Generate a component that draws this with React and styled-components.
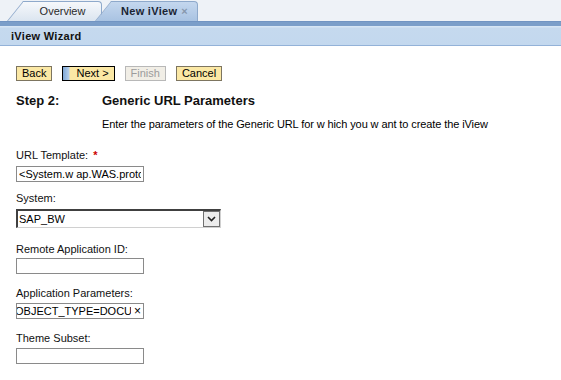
import React from "react";
import styled, { createGlobalStyle } from "styled-components";

const GlobalStyle = createGlobalStyle`
  html, body {
    margin: 0;
    padding: 0;
    background: #fff;
  }
  body {
    font-family: "Liberation Sans", Arial, sans-serif;
    font-size: 11px;
    color: #000;
  }
`;

const Page = styled.div`
  width: 561px;
  height: 380px;
  overflow: hidden;
  background: #fff;
`;

const TabStrip = styled.div`
  display: flex;
  align-items: flex-end;
  height: 21px;
  padding-left: 7px;
  background: #eef2f7;
  box-sizing: border-box;
`;

const Tab = styled.div`
  position: relative;
  z-index: ${(p) => (p.$active ? 2 : 1)};
  width: ${(p) => p.$width}px;
  height: 20px;
  margin-left: ${(p) => p.$offset || 0}px;
  display: flex;
  align-items: center;
  justify-content: center;
  padding-left: 16px;
  box-sizing: border-box;
  font-size: 11px;
  font-weight: ${(p) => (p.$active ? "bold" : "normal")};
  color: ${(p) => (p.$active ? "#1a2433" : "#2a2a2a")};

  &::before {
    content: "";
    position: absolute;
    left: 0;
    bottom: 0;
    width: 26px;
    height: 19px;
    border-left: 1px solid #8ea9cb;
    border-top: 1px solid #8ea9cb;
    background: ${(p) =>
      p.$active
        ? "linear-gradient(#c4d7ee, #a9c3e2)"
        : "linear-gradient(#f6f8fb, #dbe5f0)"};
    transform: skewX(-39deg);
    transform-origin: bottom left;
  }

  &::after {
    content: "";
    position: absolute;
    left: 16px;
    right: 0;
    top: 0;
    bottom: 0;
    border-top: 1px solid #8ea9cb;
    border-right: 1px solid #8ea9cb;
    border-radius: 0 4px 0 0;
    background: ${(p) =>
      p.$active
        ? "linear-gradient(#c4d7ee, #a9c3e2)"
        : "linear-gradient(#f6f8fb, #dbe5f0)"};
  }
`;

const TabLabel = styled.span`
  position: relative;
  z-index: 1;
  letter-spacing: ${(p) => (p.$active ? "0.3px" : "0")};
`;

const Close = styled.span`
  color: #8797ad;
  margin-left: 4px;
  font-weight: bold;
`;

const Rule = styled.div`
  height: 5px;
  background: #7b9ec9;
  border-top: 1px solid #7194c2;
  box-sizing: border-box;
`;

const TitleBar = styled.div`
  height: 20px;
  display: flex;
  align-items: center;
  padding-left: 11px;
  background: linear-gradient(#d6e5f4 0, #d6e5f4 1px, #c5d9ee 2px, #c3d8ee);
  border-bottom: 1px solid #93b2d8;
  box-sizing: border-box;
  font-weight: bold;
  font-size: 11px;
  letter-spacing: 0.3px;
  color: #111;
`;

const Content = styled.div`
  padding: 20px 0 0 16px;
`;

const ButtonRow = styled.div`
  display: flex;
  gap: 10px;
`;

const Button = styled.div`
  height: 15px;
  line-height: 13px;
  padding: 0 ${(p) => (p.$focus ? "5px 0 13px" : "5px")};
  box-sizing: border-box;
  font-size: 11px;
  border: 1px solid ${(p) => (p.$disabled ? "#b8b8b8" : p.$focus ? "#000" : "#7d7560")};
  color: ${(p) => (p.$disabled ? "#9c9c9c" : "#000")};
  background: ${(p) =>
    p.$disabled
      ? "#f1eee6"
      : p.$focus
      ? "linear-gradient(90deg, #7ea7d6 0, #b6cfeb 6px, #fbe8a5 7px)"
      : "#fbe8a5"};
`;

const StepGrid = styled.div`
  display: grid;
  grid-template-columns: 86px auto;
  row-gap: 10px;
  margin-top: 12px;
`;

const StepTitle = styled.div`
  font-size: 13px;
  font-weight: bold;
  line-height: 15px;
  color: #111;
`;

const StepText = styled.div`
  grid-column: 2;
  font-size: 11px;
  line-height: 13px;
  letter-spacing: -0.1px;
`;

const Form = styled.div`
  display: flex;
  flex-direction: column;
  margin-top: 18px;
`;

const Group = styled.div`
  display: flex;
  flex-direction: column;
  align-items: flex-start;
  gap: ${(p) => p.$gap ?? 3}px;
  margin-top: ${(p) => p.$top || 0}px;
`;

const Label = styled.div`
  font-size: 11px;
  line-height: 13px;
  color: #111;
`;

const Required = styled.span`
  color: #c00;
  font-weight: bold;
  margin-left: 5px;
`;

const Field = styled.div`
  width: ${(p) => p.$width || 128}px;
  height: 16px;
  box-sizing: border-box;
  border: 1px solid #8a8a8a;
  padding: 0 2px 0 ${(p) => (p.$scrolled ? 0 : 2)}px;
  display: flex;
  align-items: center;
  overflow: hidden;
  white-space: nowrap;
  font-size: 11px;
  background: #fff;
`;

const FieldText = styled.span`
  flex: 1;
  min-width: 0;
  overflow: hidden;
  text-indent: ${(p) => p.$indent || 0}px;
`;

const ClearMark = styled.span`
  flex-shrink: 0;
  font-size: 12px;
  margin-left: 3px;
`;

const Select = styled.div`
  width: 205px;
  height: 19px;
  box-sizing: border-box;
  border-top: 2px solid #404040;
  border-left: 2px solid #404040;
  border-right: 1px solid #d0d0d0;
  border-bottom: 1px solid #d0d0d0;
  display: flex;
  align-items: center;
  justify-content: space-between;
  padding-left: 1px;
  font-size: 11px;
  background: #fff;
`;

const DropButton = styled.div`
  width: 17px;
  height: 16px;
  box-sizing: border-box;
  border: 1px solid #707070;
  background: #ececec;
  display: flex;
  align-items: center;
  justify-content: center;
`;

export default function App() {
  return (
    <Page>
      <GlobalStyle />
      <TabStrip>
        <Tab $width={95}>
          <TabLabel>Overview</TabLabel>
        </Tab>
        <Tab $width={103} $offset={-7} $active>
          <TabLabel $active>
            New iView<Close>×</Close>
          </TabLabel>
        </Tab>
      </TabStrip>
      <Rule />
      <TitleBar>iView Wizard</TitleBar>
      <Content>
        <ButtonRow>
          <Button>Back</Button>
          <Button $focus>Next &gt;</Button>
          <Button $disabled>Finish</Button>
          <Button>Cancel</Button>
        </ButtonRow>
        <StepGrid>
          <StepTitle>Step 2:</StepTitle>
          <StepTitle>Generic URL Parameters</StepTitle>
          <StepText>
            Enter the parameters of the Generic URL for w hich you w ant to create the iView
          </StepText>
        </StepGrid>
        <Form>
          <Group $gap={4}>
            <Label>
              URL Template:<Required>*</Required>
            </Label>
            <Field>
              <FieldText>&lt;System.w ap.WAS.protocol</FieldText>
            </Field>
          </Group>
          <Group $top={10} $gap={4}>
            <Label>System:</Label>
            <Select>
              <span>SAP_BW</span>
              <DropButton>
                <svg width="9" height="6" viewBox="0 0 9 6">
                  <path d="M1 1 L4.5 4.5 L8 1" fill="none" stroke="#222" strokeWidth="1.6" />
                </svg>
              </DropButton>
            </Select>
          </Group>
          <Group $top={15} $gap={2}>
            <Label>Remote Application ID:</Label>
            <Field />
          </Group>
          <Group $top={13}>
            <Label>Application Parameters:</Label>
            <Field $scrolled>
              <FieldText $indent={-2}>OBJECT_TYPE=DOCUMENT</FieldText>
              <ClearMark>×</ClearMark>
            </Field>
          </Group>
          <Group $top={13} $gap={3}>
            <Label>Theme Subset:</Label>
            <Field />
          </Group>
        </Form>
      </Content>
    </Page>
  );
}
